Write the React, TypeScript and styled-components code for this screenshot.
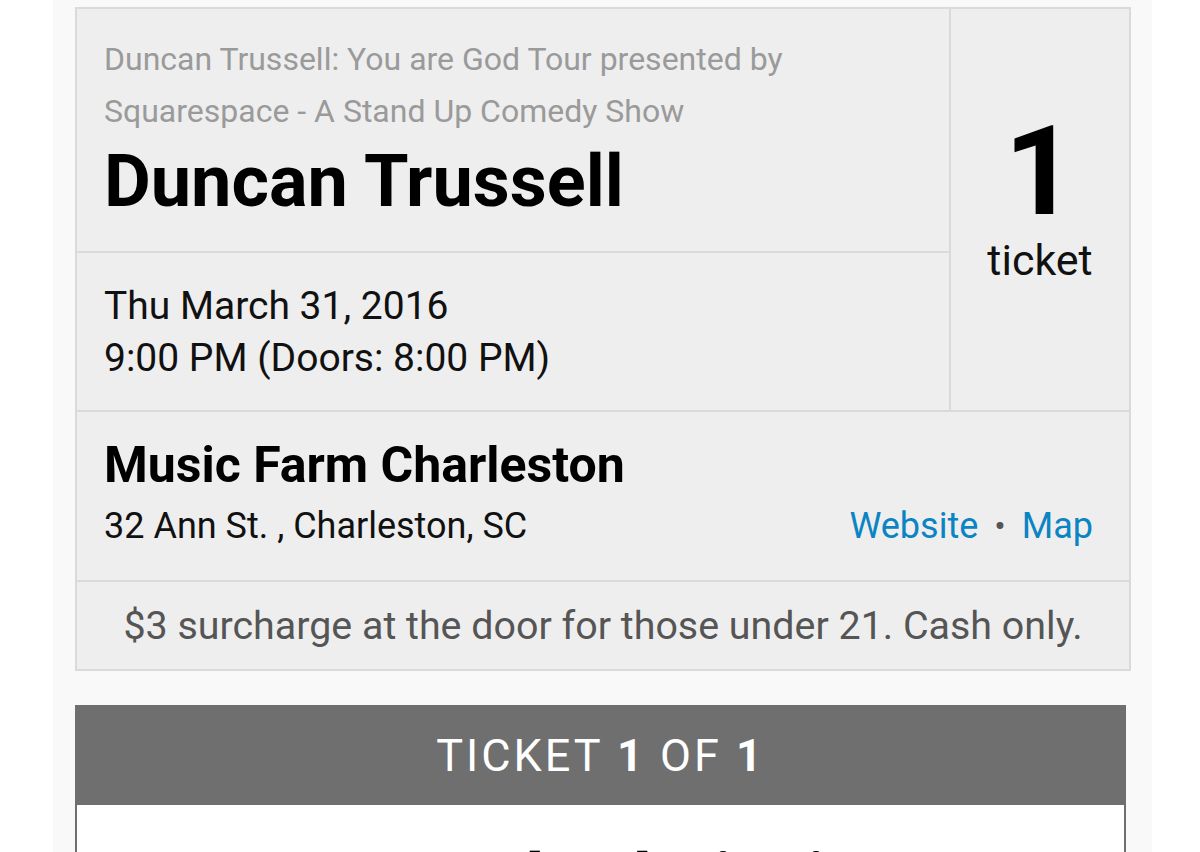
import { createGlobalStyle } from 'styled-components';
import styled from 'styled-components';

const GlobalStyle = createGlobalStyle`
  html, body {
    margin: 0;
    padding: 0;
    background: #ffffff;
    font-family: Roboto, "Liberation Sans", Arial, sans-serif;
  }
  * {
    box-sizing: border-box;
  }
`;

const App = () => {
  return (
    <>
      <GlobalStyle />
      <Page>
        <Column>
          <EventCard>
            <TopRow>
              <MainCol>
                <TitleSection>
                  <Subtitle>Duncan Trussell: You are God Tour presented by Squarespace - A Stand Up Comedy Show</Subtitle>
                  <Headliner>Duncan Trussell</Headliner>
                </TitleSection>
                <DateSection>
                  <DateLine>Thu March 31, 2016</DateLine>
                  <DateLine>9:00 PM (Doors: 8:00 PM)</DateLine>
                </DateSection>
              </MainCol>
              <CountCol>
                <CountNumber>1</CountNumber>
                <CountLabel>ticket</CountLabel>
              </CountCol>
            </TopRow>
            <VenueSection>
              <VenueName>Music Farm Charleston</VenueName>
              <AddressRow>
                <Address>32 Ann St. , Charleston, SC</Address>
                <Links>
                  <VenueLink href="#">Website</VenueLink>
                  <Dot>•</Dot>
                  <VenueLink href="#">Map</VenueLink>
                </Links>
              </AddressRow>
            </VenueSection>
            <NoteSection>$3 surcharge at the door for those under 21. Cash only.</NoteSection>
          </EventCard>
          <TicketBox>
            <TicketHeader>
              TICKET <strong>1</strong> OF <strong>1</strong>
            </TicketHeader>
            <TicketBody>
              <TicketType>General Admission</TicketType>
            </TicketBody>
          </TicketBox>
        </Column>
      </Page>
    </>
  );
};

const Page = styled.div`
  width: 1200px;
  height: 852px;
  overflow: hidden;
  background: #ffffff;
`;
const Column = styled.div`
  margin-left: 53px;
  width: 1099px;
  height: 852px;
  background: #f9f9f9;
  padding: 7px 0 0 22px;
`;
const EventCard = styled.div`
  width: 1056px;
  background: #eeeeee;
  border: 2px solid #dadada;
`;
const TopRow = styled.div`
  display: flex;
  border-bottom: 2px solid #dadada;
`;
const MainCol = styled.div`
  width: 874px;
  border-right: 2px solid #dadada;
`;
const TitleSection = styled.div`
  padding: 24px 0 24px 27px;
  border-bottom: 2px solid #dadada;
`;
const Subtitle = styled.div`
  font-size: 32px;
  line-height: 52px;
  color: #9a9a9a;
  width: 760px;
`;
const Headliner = styled.h1`
  margin: 0;
  font-size: 72px;
  line-height: 90px;
  font-weight: 700;
  color: #000;
`;
const DateSection = styled.div`
  padding: 27px 0 26px 27px;
`;
const DateLine = styled.div`
  font-size: 39px;
  line-height: 52px;
  color: #111;
`;
const CountCol = styled.div`
  flex: 1;
  display: flex;
  flex-direction: column;
  align-items: center;
  justify-content: center;
  padding-bottom: 24px;
`;
const CountNumber = styled.div`
  font-size: 125px;
  font-weight: 700;
  line-height: 116px;
  color: #000;
`;
const CountLabel = styled.div`
  margin-top: 8px;
  font-size: 43px;
  line-height: 44px;
  color: #111;
`;
const VenueSection = styled.div`
  padding: 22px 36px 28px 27px;
  border-bottom: 2px solid #dadada;
`;
const VenueName = styled.div`
  font-size: 50px;
  line-height: 62px;
  font-weight: 700;
  color: #000;
`;
const AddressRow = styled.div`
  display: flex;
  justify-content: space-between;
  align-items: center;
  margin-top: 4px;
`;
const Address = styled.div`
  font-size: 36px;
  line-height: 52px;
  color: #111;
`;
const Links = styled.div`
  display: flex;
  align-items: center;
  gap: 16px;
  font-size: 36px;
  line-height: 52px;
`;
const VenueLink = styled.a`
  color: #0a84c2;
  text-decoration: none;
`;
const Dot = styled.span`
  color: #555;
  font-size: 34px;
`;
const NoteSection = styled.div`
  padding: 18px 0 17px;
  text-align: center;
  font-size: 39.4px;
  line-height: 52px;
  color: #555;
`;
const TicketBox = styled.div`
  margin-top: 34px;
  width: 1051px;
`;
const TicketHeader = styled.div`
  height: 100px;
  background: #6f6f6f;
  color: #fff;
  display: flex;
  align-items: center;
  justify-content: center;
  font-size: 45px;
  letter-spacing: 3px;
  white-space: pre;
  strong {
    font-weight: 700;
  }
`;
const TicketBody = styled.div`
  background: #fff;
  border-left: 2px solid #6f6f6f;
  border-right: 2px solid #6f6f6f;
  height: 200px;
  padding-top: 33px;
  text-align: center;
`;
const TicketType = styled.div`
  font-size: 72px;
  font-weight: 700;
  color: #000;
`;

export default App;
